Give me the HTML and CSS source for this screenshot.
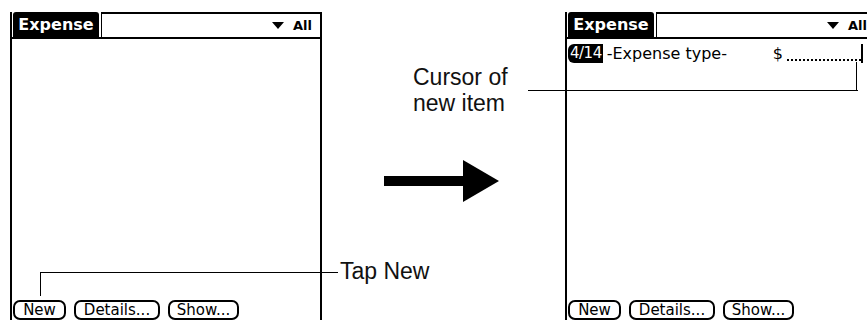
FILE: index.html
```
<!DOCTYPE html>
<html lang="en">
<head>
    <meta charset="UTF-8">
    <title>Expense - new item</title>
    <link rel="stylesheet" href="styles.css">
</head>
<body>
    <div id="stage">
        <div class="screen">
            <div class="titlebar">
                <div class="tab">Expense</div>
                <div class="category"><span class="caret"></span>All</div>
            </div>
            <div class="list"></div>
            <div class="buttons">
                <span class="btn btn-new">New</span>
                <span class="btn btn-details">Details...</span>
                <span class="btn btn-show">Show...</span>
            </div>
        </div>

        <div class="middle">
            <svg class="arrow" width="116" height="44" viewBox="0 0 116 44">
                <rect x="0" y="17" width="80" height="10" fill="#000"/>
                <polygon points="79,1 115,22 79,43" fill="#000"/>
            </svg>
        </div>

        <div class="screen">
            <div class="titlebar">
                <div class="tab">Expense</div>
                <div class="category"><span class="caret"></span>All</div>
            </div>
            <div class="list">
                <div class="row">
                    <span class="date">4/14</span>
                    <span class="type">-Expense type-</span>
                    <span class="amount">$</span>
                    <span class="field"></span>
                    <span class="cursor"></span>
                </div>
            </div>
            <div class="buttons">
                <span class="btn btn-new">New</span>
                <span class="btn btn-details">Details...</span>
                <span class="btn btn-show">Show...</span>
            </div>
        </div>

        <!-- callouts -->
        <div class="label label-cursor">Cursor of<br>new item</div>
        <div class="lead lead-cursor-h"></div>
        <div class="lead lead-cursor-v"></div>

        <div class="label label-tap">Tap New</div>
        <div class="lead lead-tap-h"></div>
        <div class="lead lead-tap-v"></div>
    </div>
</body>
</html>
```

FILE: styles.css
```
*{
    margin: 0;
    padding: 0;
    box-sizing: border-box;
}
html,body{
    width: 867px;
    height: 320px;
    overflow: hidden;
    background: #fff;
}
#stage{
    position: relative;
    width: 867px;
    height: 320px;
    display: flex;
    padding: 12px 0 0 10px;
}

/* palm screen */
.screen{
    flex: 0 0 312px;
    height: 312px;
    border-left: 2px solid #000;
    border-right: 2px solid #000;
    display: flex;
    flex-direction: column;
    font-family: "DejaVu Sans", sans-serif;
    font-size: 15px;
    color: #000;
}
.titlebar{
    display: flex;
    height: 27px;
    border-bottom: 2px solid #000;
}
.tab{
    width: 86px;
    margin-left: 1px;
    background: #000;
    color: #fff;
    font-weight: bold;
    font-size: 16px;
    line-height: 25px;
    text-align: center;
    border-radius: 3px 3px 0 0;
}
.category{
    flex: 1;
    margin-left: 2px;
    border-top: 2px solid #000;
    border-left: 1px solid #000;
    display: flex;
    justify-content: flex-end;
    align-items: center;
    padding-right: 8px;
    font-size: 13px;
    font-weight: bold;
}
.caret{
    width: 0;
    height: 0;
    border-left: 6px solid transparent;
    border-right: 6px solid transparent;
    border-top: 7px solid #000;
    margin-right: 9px;
}
.list{
    flex: 1;
    padding-top: 5px;
}
.row{
    display: flex;
    align-items: center;
    height: 19px;
    padding-left: 1px;
    font-size: 16px;
}
.date{
    background: #000;
    color: #fff;
    font-size: 15px;
    padding: 0 1px 0 2px;
    line-height: 19px;
    border-radius: 6px 0 0 6px;
    letter-spacing: -0.5px;
}
.type{
    margin-left: 4px;
    width: 166px;
}
.amount{
    width: 10px;
}
.field{
    width: 74px;
    height: 15px;
    margin-left: 4px;
    border-bottom: 2px dotted #000;
}
.cursor{
    width: 2px;
    height: 19px;
    background: #000;
}
.buttons{
    display: flex;
    gap: 8px;
    padding: 0 0 4px 1px;
}
.btn{
    height: 20px;
    border: 2px solid #000;
    border-radius: 7px;
    text-align: center;
    line-height: 16px;
}
.btn-new{ width: 53px; }
.btn-details{ width: 86px; }
.btn-show{ width: 71px; }

/* arrow between the screens */
.middle{
    flex: 0 0 243px;
    display: flex;
    justify-content: center;
    padding: 147px 4px 0 0;
}
.arrow{
    display: block;
}

/* callouts */
.label{
    position: absolute;
    font-family: "Liberation Sans", Arial, sans-serif;
    font-size: 23px;
    line-height: 26px;
    color: #111;
}
.label-cursor{
    left: 413px;
    top: 64px;
}
.label-tap{
    left: 340px;
    top: 258px;
}
.lead{
    position: absolute;
    background: #000;
}
.lead-cursor-h{
    left: 528px;
    top: 90px;
    width: 330px;
    height: 1px;
}
.lead-cursor-v{
    left: 856px;
    top: 62px;
    width: 1px;
    height: 29px;
}
.lead-tap-h{
    left: 40px;
    top: 272px;
    width: 298px;
    height: 1px;
}
.lead-tap-v{
    left: 40px;
    top: 272px;
    width: 1px;
    height: 24px;
}
```
